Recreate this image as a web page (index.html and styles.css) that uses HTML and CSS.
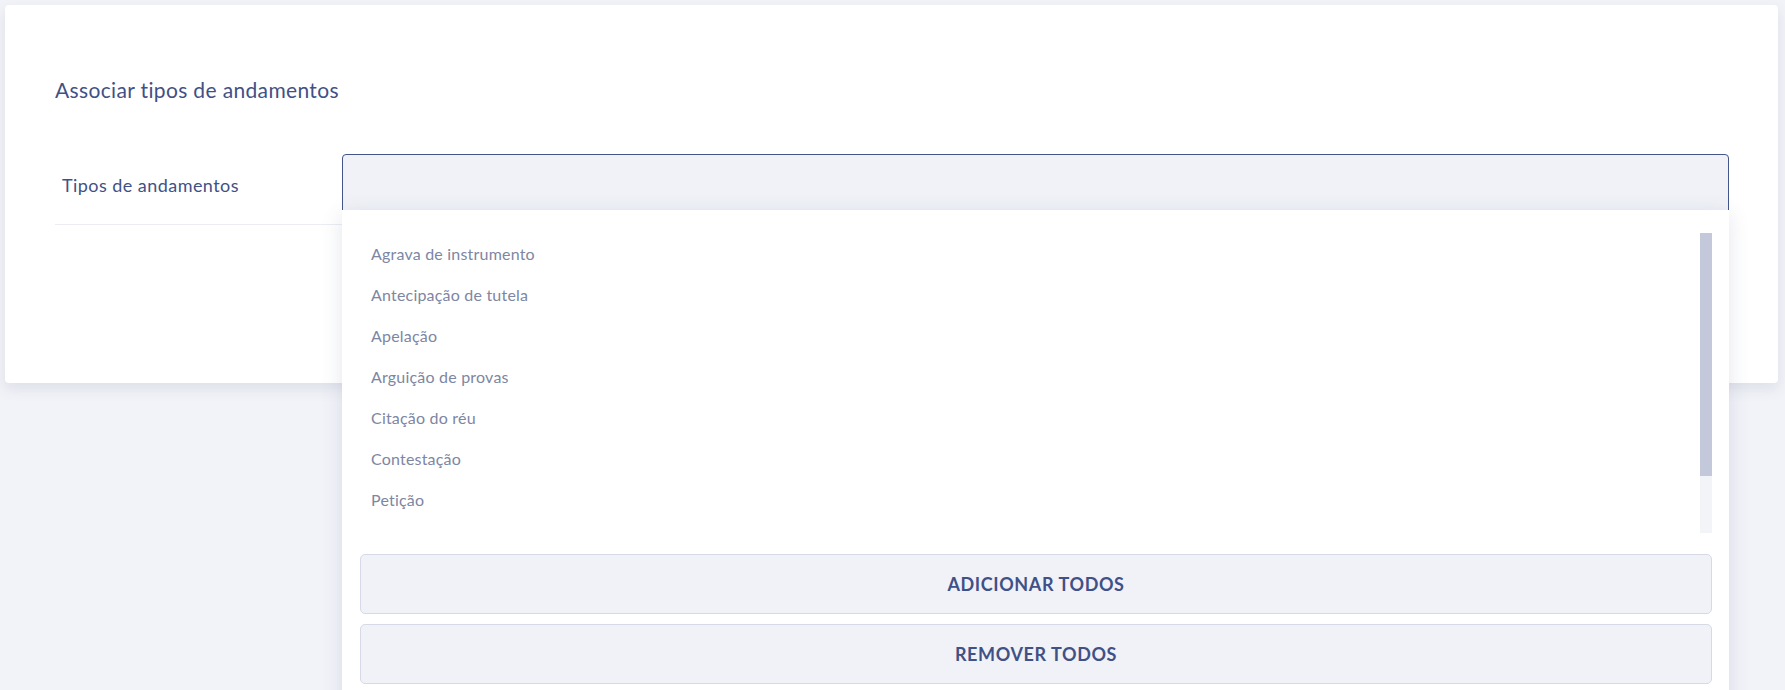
FILE: index.html
```
<!DOCTYPE html>
<html>
<head>
  <meta charset="UTF-8">
  <title>Associar tipos de andamentos</title>
  <link rel="stylesheet" href="styles.css">
</head>
<body>
  <!-- Main card -->
  <div class="card">
    <h2 class="card-title">Associar tipos de andamentos</h2>

    <!-- Form row: label + multi select -->
    <div class="form-row">
      <label class="form-label" for="tipos-input">Tipos de andamentos</label>
      <div class="select-field">
        <div class="select-input" id="tipos-input"></div>

        <!-- Open dropdown -->
        <div class="select-dropdown">
          <div class="option-scroll">
            <ul class="option-list">
              <li>Agrava de instrumento</li>
              <li>Antecipação de tutela</li>
              <li>Apelação</li>
              <li>Arguição de provas</li>
              <li>Citação do réu</li>
              <li>Contestação</li>
              <li>Petição</li>
            </ul>
            <div class="scrollbar">
              <div class="scrollbar-thumb"></div>
            </div>
          </div>
          <button class="dropdown-btn">Adicionar todos</button>
          <button class="dropdown-btn">Remover todos</button>
        </div>
      </div>
    </div>
  </div>
</body>
</html>
```

FILE: styles.css
```
:root {
  --page-bg: #f2f3f8;
  --card-bg: #ffffff;
  --primary-text: #3f5186;
  --muted-text: #7d86a3;
  --field-bg: #f0f2f7;
  --field-border: #44558a;
  --btn-border: #d6dae6;
  --line: #ebedf3;
  --thumb: #c3c9da;
  --track: #f3f4f8;
}

html, body {
  height: 100%;
}

body {
  margin: 0;
  padding: 5px 7px 0 5px;
  background-color: var(--page-bg);
  font-family: Lato, "Open Sans", Arial, sans-serif;
  color: var(--primary-text);
  overflow: hidden;
  box-sizing: border-box;
}

/* Card */
.card {
  background-color: var(--card-bg);
  border-radius: 4px;
  padding: 73px 49px 158px 50px;
  box-shadow: 0 6px 14px rgba(70, 80, 120, 0.12);
}

.card-title {
  margin: 0 0 52px 0;
  font-size: 21px;
  line-height: 24px;
  font-weight: 400;
  letter-spacing: 0.35px;
  color: var(--primary-text);
}

/* Form row */
.form-row {
  display: flex;
  align-items: center;
  padding-bottom: 8px;
  border-bottom: 1px solid var(--line);
}

.form-label {
  flex: 0 0 287px;
  box-sizing: border-box;
  padding-left: 7px;
  font-size: 18px;
  letter-spacing: 0.45px;
  color: var(--primary-text);
}

.select-field {
  flex: 1;
  position: relative;
}

.select-input {
  height: 62px;
  box-sizing: border-box;
  border: 1px solid var(--field-border);
  border-radius: 4px;
  background-color: var(--field-bg);
}

/* Dropdown */
.select-dropdown {
  position: absolute;
  top: 56px;
  left: 0;
  right: 0;
  z-index: 10;
  background-color: #ffffff;
  padding: 23px 17px 20px 18px;
  box-shadow: 0 4px 20px rgba(70, 80, 120, 0.14);
}

.option-scroll {
  display: flex;
  height: 300px;
  margin-bottom: 21px;
}

.option-list {
  flex: 1;
  list-style: none;
  margin: 0;
  padding: 0;
  overflow: hidden;
}

.option-list li {
  height: 41px;
  line-height: 41px;
  padding-left: 11px;
  font-size: 16px;
  letter-spacing: 0.2px;
  color: var(--muted-text);
}

.scrollbar {
  flex: 0 0 12px;
  background-color: var(--track);
}

.scrollbar-thumb {
  height: 243px;
  background-color: var(--thumb);
}

.dropdown-btn {
  display: block;
  width: 100%;
  height: 60px;
  margin-bottom: 10px;
  background-color: var(--field-bg);
  border: 1px solid var(--btn-border);
  border-radius: 5px;
  font-family: Lato, "Open Sans", Arial, sans-serif;
  font-size: 18px;
  font-weight: 700;
  letter-spacing: 0.6px;
  text-transform: uppercase;
  color: var(--primary-text);
  cursor: pointer;
}
```
